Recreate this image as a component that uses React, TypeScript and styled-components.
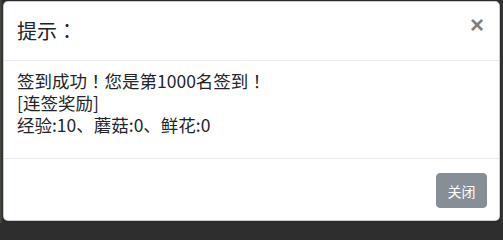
import React from 'react';
import styled, { createGlobalStyle } from 'styled-components';

const GlobalStyle = createGlobalStyle`
  html, body {
    margin: 0;
    padding: 0;
    background: #2e2e2e;
  }
  body {
    font-family: 'Noto Sans CJK SC', 'Noto Sans', sans-serif;
    color: #212529;
  }
`;

const Backdrop = styled.div`
  width: 503px;
  height: 223px;
  box-sizing: border-box;
  padding: 1px 3px 2px 3px;
  background: linear-gradient(90deg, #4a4a44 0px, #2b2b2b 3px, #2b2b2b 500px, #3a3a3a 503px);
`;

const Dialog = styled.div`
  height: 100%;
  display: flex;
  flex-direction: column;
  background: #fff;
  border: 1px solid rgba(0, 0, 0, 0.2);
  border-radius: 5px;
  box-sizing: border-box;
`;

const Header = styled.div`
  display: flex;
  align-items: center;
  justify-content: space-between;
  height: 58px;
  padding: 0 15px 0 13px;
  border-bottom: 1px solid #e9ecef;
`;

const Title = styled.h5`
  margin: 0;
  font-size: 20px;
  font-weight: 400;
  line-height: 28px;
  color: #212529;
`;

/* full-width punctuation centred in its box, as in the original */
const Punct = styled.span`
  font-family: 'Noto Sans CJK TC', sans-serif;
`;

const Close = styled.button`
  border: 0;
  background: transparent;
  padding: 0;
  margin: 0 0 12px;
  cursor: pointer;
  font-family: 'Liberation Sans', Arial, sans-serif;
  font-size: 24px;
  font-weight: 700;
  line-height: 1;
  color: #000;
  opacity: 0.5;
`;

const Body = styled.div`
  padding: 9px 13px 22px;
  font-size: 17.5px;
  line-height: 22px;
  border-bottom: 1px solid #e9ecef;
`;

const Line = styled.div`
  white-space: nowrap;
`;

const Footer = styled.div`
  flex: 1;
  display: flex;
  justify-content: flex-end;
  align-items: flex-start;
  padding: 14px 12px 0;
`;

const Button = styled.button<{ $tone?: string }>`
  width: 51px;
  height: 35px;
  border: 1px solid ${(p) => p.$tone ?? '#868e96'};
  border-radius: 4px;
  background: ${(p) => p.$tone ?? '#868e96'};
  color: #fff;
  font-family: 'Noto Sans CJK SC', sans-serif;
  font-size: 14px;
  line-height: 1;
  padding: 0;
  cursor: pointer;
`;

export default function App() {
  return (
    <>
      <GlobalStyle />
      <Backdrop>
        <Dialog>
          <Header>
            <Title>
              提示<Punct>：</Punct>
            </Title>
            <Close aria-label="Close">×</Close>
          </Header>
          <Body>
            <Line>
              签到成功<Punct>！</Punct>您是第1000名签到<Punct>！</Punct>
            </Line>
            <Line>[连签奖励]</Line>
            <Line>经验:10、蘑菇:0、鲜花:0</Line>
          </Body>
          <Footer>
            <Button>关闭</Button>
          </Footer>
        </Dialog>
      </Backdrop>
    </>
  );
}
